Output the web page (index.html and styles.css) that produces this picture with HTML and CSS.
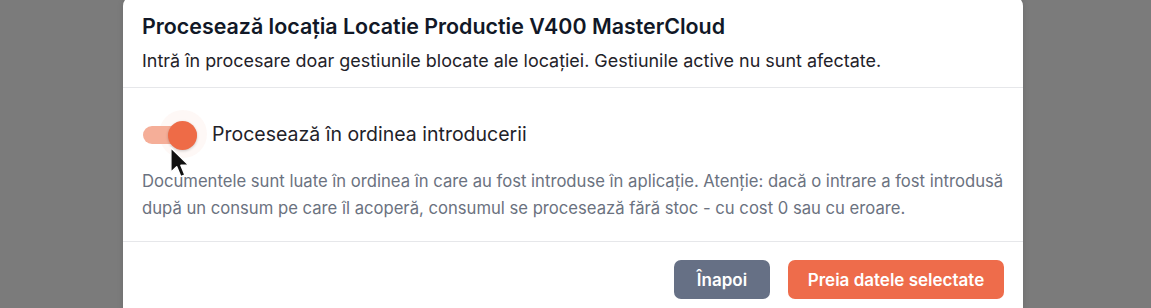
FILE: index.html
```html
<!DOCTYPE html>
<html lang="ro">
<head>
<meta charset="utf-8">
<link rel="stylesheet" href="styles.css">
</head>
<body>
<div class="overlay">
  <div class="modal">
    <div class="modal-header">
      <h1 class="title">Procesează locația Locatie Productie V400 MasterCloud</h1>
      <p class="subtitle">Intră în procesare doar gestiunile blocate ale locației. Gestiunile active nu sunt afectate.</p>
    </div>
    <div class="modal-body">
      <label class="switch-row">
        <span class="switch">
          <span class="halo"></span>
          <span class="track"></span>
          <span class="knob"></span>
          <svg class="cursor" width="22" height="33" viewBox="0 0 18 27"><path d="M1.5 1.5 L1.5 21.5 L6.3 17 L9.6 25 L13 23.6 L9.7 15.8 L16 15.5 Z" fill="#111" stroke="#fff" stroke-width="1.2" stroke-linejoin="round"/></svg>
        </span>
        <span class="switch-label">Procesează în ordinea introducerii</span>
      </label>
      <p class="description">Documentele sunt luate în ordinea în care au fost introduse în aplicație. Atenție: dacă o intrare a fost introdusă după un consum pe care îl acoperă, consumul se procesează fără stoc - cu cost 0 sau cu eroare.</p>
    </div>
    <div class="modal-footer">
      <button class="btn btn-secondary">Înapoi</button>
      <button class="btn btn-primary">Preia datele selectate</button>
    </div>
  </div>
</div>
</body>
</html>
```
FILE: styles.css
```css
* { box-sizing: border-box; }
html, body {
  margin: 0;
  padding: 0;
  height: 100%;
  overflow: hidden;
}
body {
  background: #7b7b7b;
  font-family: Inter, "Noto Sans", sans-serif;
}
.overlay {
  display: flex;
  justify-content: flex-start;
  padding-left: 123px;
}
.modal {
  width: 900px;
  margin-top: -4px;
  background: #fff;
  border-radius: 10px;
  box-shadow: 0 0 6px rgba(0,0,0,0.12);
}
.modal-header {
  padding: 16px 19px 14px;
  border-bottom: 1px solid #e6e7ea;
}
.title {
  margin: 0;
  font-size: 21.4px;
  line-height: 28px;
  font-weight: 600;
  color: #111827;
}
.subtitle {
  margin: 9px 0 0;
  font-size: 17.95px;
  line-height: 24px;
  color: #1f2229;
}
.modal-body {
  padding: 22px 10px 20px 19px;
  border-bottom: 1px solid #e6e7ea;
}
.switch-row {
  display: flex;
  align-items: center;
  height: 48px;
  gap: 12px;
}
.switch {
  position: relative;
  width: 58px;
  height: 48px;
  flex: none;
}
.halo {
  position: absolute;
  left: 17px;
  top: 0;
  width: 48px;
  height: 48px;
  border-radius: 50%;
  background: rgba(238, 108, 74, 0.05);
}
.track {
  position: absolute;
  left: 1px;
  top: 16px;
  width: 54px;
  height: 18px;
  border-radius: 9px;
  background: #f5ae98;
}
.knob {
  position: absolute;
  left: 26px;
  top: 11px;
  width: 29px;
  height: 29px;
  border-radius: 50%;
  background: #ee6b47;
  box-shadow: 0 1px 3px rgba(0,0,0,0.2);
}
.cursor {
  position: absolute;
  left: 27px;
  top: 36px;
}
.switch-label {
  font-size: 19.5px;
  line-height: 26px;
  color: #1f2229;
}
.description {
  margin: 10px 0 0;
  font-size: 16.65px;
  line-height: 26.5px;
  color: #6b7280;
}
.modal-footer {
  display: flex;
  justify-content: flex-end;
  gap: 18px;
  padding: 18px 19px 20px;
}
.btn {
  height: 39px;
  border: none;
  border-radius: 7px;
  font-family: Inter, "Noto Sans", sans-serif;
  font-size: 17px;
  font-weight: 600;
  color: #fff;
  padding: 0;
}
.btn-secondary {
  width: 96px;
  background: #667085;
}
.btn-primary {
  width: 216px;
  background: #ee6c4b;
}
```
